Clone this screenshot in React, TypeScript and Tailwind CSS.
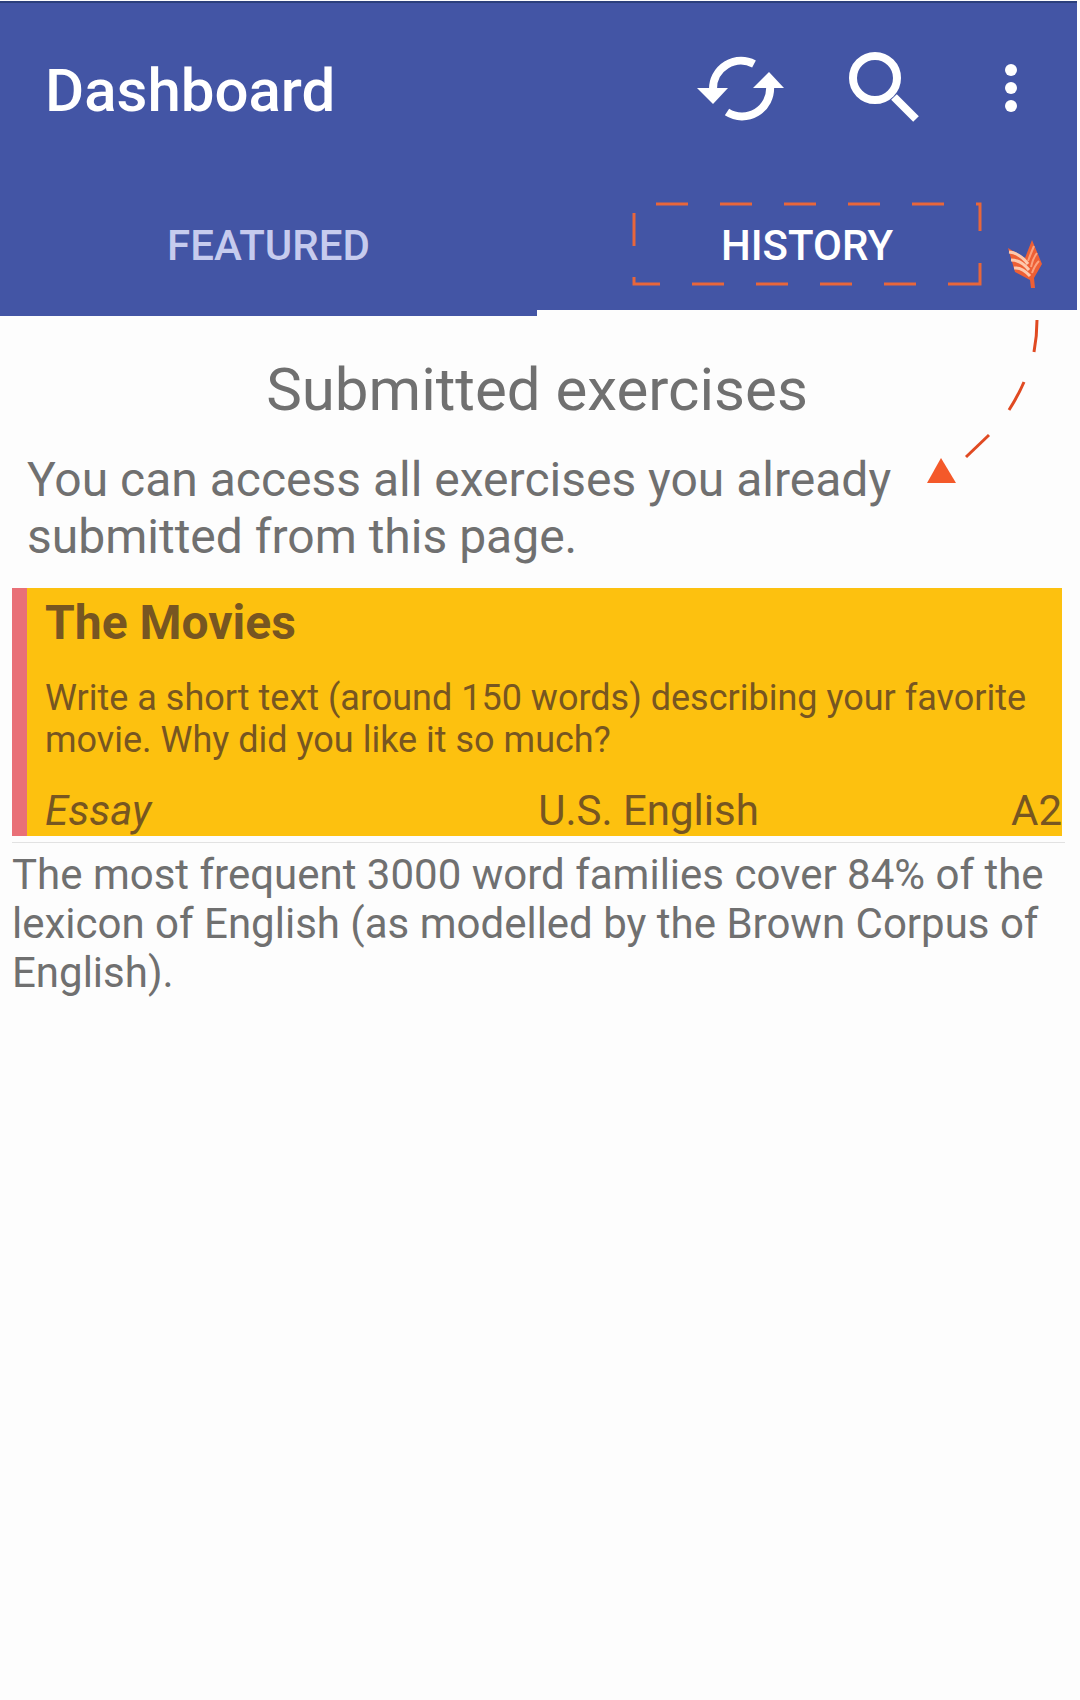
function SyncIcon() {
  return (
    <svg viewBox="0 0 88 66" className="h-[66px] w-[88px]" fill="none" aria-hidden="true">
      <path d="M16 34A28 28 0 0 1 57 9" stroke="white" strokeWidth="8" />
      <path d="M0 33H31L16 49Z" fill="white" />
      <path d="M73 31A28 28 0 0 1 30 57" stroke="white" strokeWidth="8" />
      <path d="M56 33H87L72 17Z" fill="white" />
    </svg>
  );
}

function SearchIcon() {
  return (
    <svg viewBox="0 0 72 72" className="size-[72px]" fill="none" stroke="white" aria-hidden="true">
      <circle cx="26" cy="26" r="22" strokeWidth="8" />
      <path d="M45 45L67 67" strokeWidth="8" />
    </svg>
  );
}

function MoreIcon() {
  return (
    <svg viewBox="0 0 14 50" className="h-[50px] w-[14px]" fill="white" aria-hidden="true">
      <circle cx="7" cy="7" r="6" />
      <circle cx="7" cy="25" r="6" />
      <circle cx="7" cy="43" r="6" />
    </svg>
  );
}

function DashedFrame() {
  return (
    <svg
      viewBox="0 0 350 84"
      className="pointer-events-none absolute top-[26px] left-1/2 h-[84px] w-[350px] -translate-x-1/2"
      fill="none"
      stroke="#e8663a"
      strokeWidth="3"
      aria-hidden="true"
    >
      <path d="M24 2H56M88 2H120M152 2H184M216 2H248M280 2H312M344 2H348V29" />
      <path d="M348 61V82H316M284 82H252M220 82H188M156 82H124M92 82H60M28 82H2V75M2 44V11" />
    </svg>
  );
}

function Pointer() {
  return (
    <svg
      viewBox="0 0 160 250"
      className="pointer-events-none absolute top-[236px] right-0 h-[250px] w-[160px]"
      fill="none"
      aria-hidden="true"
    >
      <path d="M88 12L105 22L112 4L122 28L114 42L115 52H111L110 44L95 36Z" fill="#ee5f35" />
      <g stroke="#fdc9ae" strokeWidth="3">
        <path d="M89 16Q100 17 108 28" />
        <path d="M91 24Q101 24 109 34" />
        <path d="M94 32Q102 31 110 40" />
      </g>
      <g stroke="#fba27e" strokeWidth="2">
        <path d="M114 10Q111 17 108 25" />
        <path d="M117 17Q113 22 111 31" />
        <path d="M119 25Q115 29 112 37" />
      </g>
      <path d="M117 84Q117 100 114 116" stroke="#e04a22" strokeWidth="3" />
      <path d="M104 146Q98 160 89 174" stroke="#e04a22" strokeWidth="3" />
      <path d="M69 199L46 221" stroke="#e04a22" strokeWidth="3" />
      <path d="M21 222L36 247H7Z" fill="#f4592a" />
    </svg>
  );
}

export default function App() {
  return (
    <div className="relative min-h-screen bg-[#fdfdfd] pt-px pr-[3px] font-['Roboto',sans-serif] text-[#707070]">
      <header className="border-t-2 border-[#2b3f7c] bg-[#4355a5] text-white">
        <div className="flex h-[173px] items-center pr-[59px] pl-[45px]">
          <h1 className="grow pt-[3px] text-[60px] leading-[72px] font-medium">Dashboard</h1>
          <div className="flex items-center pb-[3px]">
            <button type="button" aria-label="Refresh" className="mr-[64px]">
              <SyncIcon />
            </button>
            <button type="button" aria-label="Search" className="mr-[83px]">
              <SearchIcon />
            </button>
            <button type="button" aria-label="More options">
              <MoreIcon />
            </button>
          </div>
        </div>
        <div
          role="tablist"
          className="grid grid-cols-[537fr_540fr] text-[42px] leading-[48px] font-medium"
        >
          <button
            type="button"
            role="tab"
            aria-selected="false"
            className="h-[140px] border-b-[6px] border-transparent pt-[6px] text-[#c6cbee]"
          >
            FEATURED
          </button>
          <button
            type="button"
            role="tab"
            aria-selected="true"
            className="relative h-[140px] border-b-[6px] border-[#fdfdfd] pt-[6px]"
          >
            HISTORY
            <DashedFrame />
          </button>
        </div>
      </header>

      <main className="pt-[38px] pr-3 pl-3">
        <div className="pr-[3px]">
          <h2 className="text-center text-[60px] leading-[72px]">Submitted exercises</h2>
          <p className="mt-[25px] pr-[140px] pl-[15px] text-[48px] leading-[57px]">
            You can access all exercises you already submitted from this page.
          </p>
          <article className="mt-[23px] border-l-[15px] border-[#e97077] bg-[#fdc10f] pl-[18px] text-[#775621]">
            <h3 className="pt-[7px] text-[48px] leading-[56px] font-bold">The Movies</h3>
            <p className="mt-[26px] text-[36px] leading-[42px]">
              Write a short text (around 150 words) describing your favorite movie. Why did you
              like it so much?
            </p>
            <div className="mt-[25px] flex text-[42px] leading-[50px]">
              <span className="w-[48.5%] italic">Essay</span>
              <span className="grow">U.S. English</span>
              <span>A2</span>
            </div>
          </article>
        </div>
        <hr className="mt-[6px] border-[#e2e2e2]" />
        <p className="mt-[7px] text-[42px] leading-[49px]">
          The most frequent 3000 word families cover 84% of the lexicon of English (as modelled by
          the Brown Corpus of English).
        </p>
      </main>
      <Pointer />
    </div>
  );
}
